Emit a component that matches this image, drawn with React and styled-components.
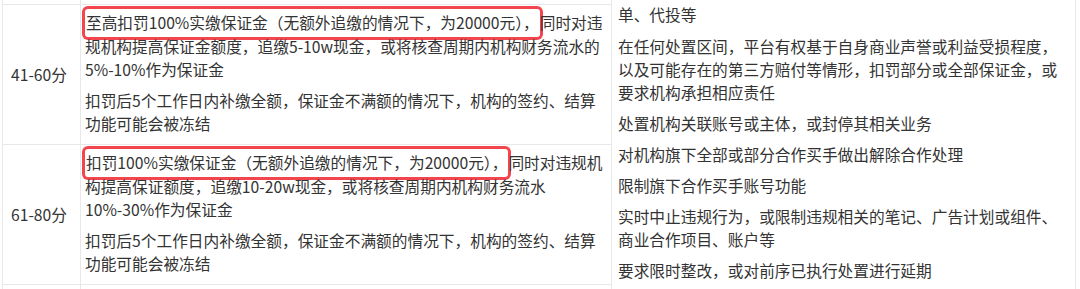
import React from 'react';
import styled, { createGlobalStyle } from 'styled-components';

const GlobalStyle = createGlobalStyle`
  html, body {
    margin: 0;
    padding: 0;
    background: #fff;
  }
  body {
    font-family: "Noto Sans CJK SC", "Noto Sans", sans-serif;
    color: #333;
  }
`;

const Page = styled.div`
  width: 1080px;
  height: 289px;
  overflow: hidden;
  padding-left: 2px;
  box-sizing: border-box;
`;

const Table = styled.div`
  display: grid;
  grid-template-columns: 78px 531px 464px;
  grid-template-rows: 5px 140px 140px 40px;
  border-left: 1px solid #e8e8e8;
  font-size: 15.7px;
  line-height: 23px;
`;

const Cell = styled.div`
  box-sizing: border-box;
  border-right: 1px solid #e8e8e8;
  border-bottom: ${(p) => (p.$open ? 'none' : '1px solid #e8e8e8')};
  padding: ${(p) => p.$pad || '0'};
  line-height: ${(p) => p.$lh || '23px'};
`;

const ScoreCell = styled(Cell)`
  display: flex;
  align-items: center;
  padding-left: 8px;
`;

const ActionCell = styled(Cell)`
  grid-column: 3;
  grid-row: 1 / 5;
  border-bottom: none;
  padding: 3px 8px 0 6px;
`;

const Para = styled.p`
  margin: 0 0 ${(p) => p.$gap || '7px'} 0;
  &:last-child {
    margin-bottom: 0;
  }
`;

const Marked = styled.span`
  box-shadow: 0 0 0 3px #f2454d;
  border-radius: 3px;
  padding: 2px 1px 3px;
`;

const actions = [
  '单、代投等',
  '在任何处置区间，平台有权基于自身商业声誉或利益受损程度，以及可能存在的第三方赔付等情形，扣罚部分或全部保证金，或要求机构承担相应责任',
  '处置机构关联账号或主体，或封停其相关业务',
  '对机构旗下全部或部分合作买手做出解除合作处理',
  '限制旗下合作买手账号功能',
  '实时中止违规行为，或限制违规相关的笔记、广告计划或组件、商业合作项目、账户等',
  '要求限时整改，或对前序已执行处置进行延期',
];

const rows = [
  {
    score: '41-60分',
    marked: '至高扣罚100%实缴保证金（无额外追缴的情况下，为20000元），',
    rest: '同时对违规机构提高保证金额度，追缴5-10w现金，或将核查周期内机构财务流水的5%-10%作为保证金',
  },
  {
    score: '61-80分',
    marked: '扣罚100%实缴保证金（无额外追缴的情况下，为20000元），',
    rest: '同时对违规机构提高保证额度，追缴10-20w现金，或将核查周期内机构财务流水10%-30%作为保证金',
  },
];

const freeze = '扣罚后5个工作日内补缴全额，保证金不满额的情况下，机构的签约、结算功能可能会被冻结';

export default function App() {
  return (
    <Page>
      <GlobalStyle />
      <Table>
        <Cell />
        <Cell />
        <ActionCell>
          {actions.map((a, i) => (
            <Para key={a} $gap={i === 0 ? '9px' : '8px'}>{a}</Para>
          ))}
        </ActionCell>
        {rows.map((r) => (
          <React.Fragment key={r.score}>
            <ScoreCell>{r.score}</ScoreCell>
            <Cell $pad="6px 4px 0 4px" $lh="23.5px">
              <Para>
                <Marked>{r.marked}</Marked>
                {r.rest}
              </Para>
              <Para>{freeze}</Para>
            </Cell>
          </React.Fragment>
        ))}
        <Cell $open />
        <Cell $open />
      </Table>
    </Page>
  );
}
